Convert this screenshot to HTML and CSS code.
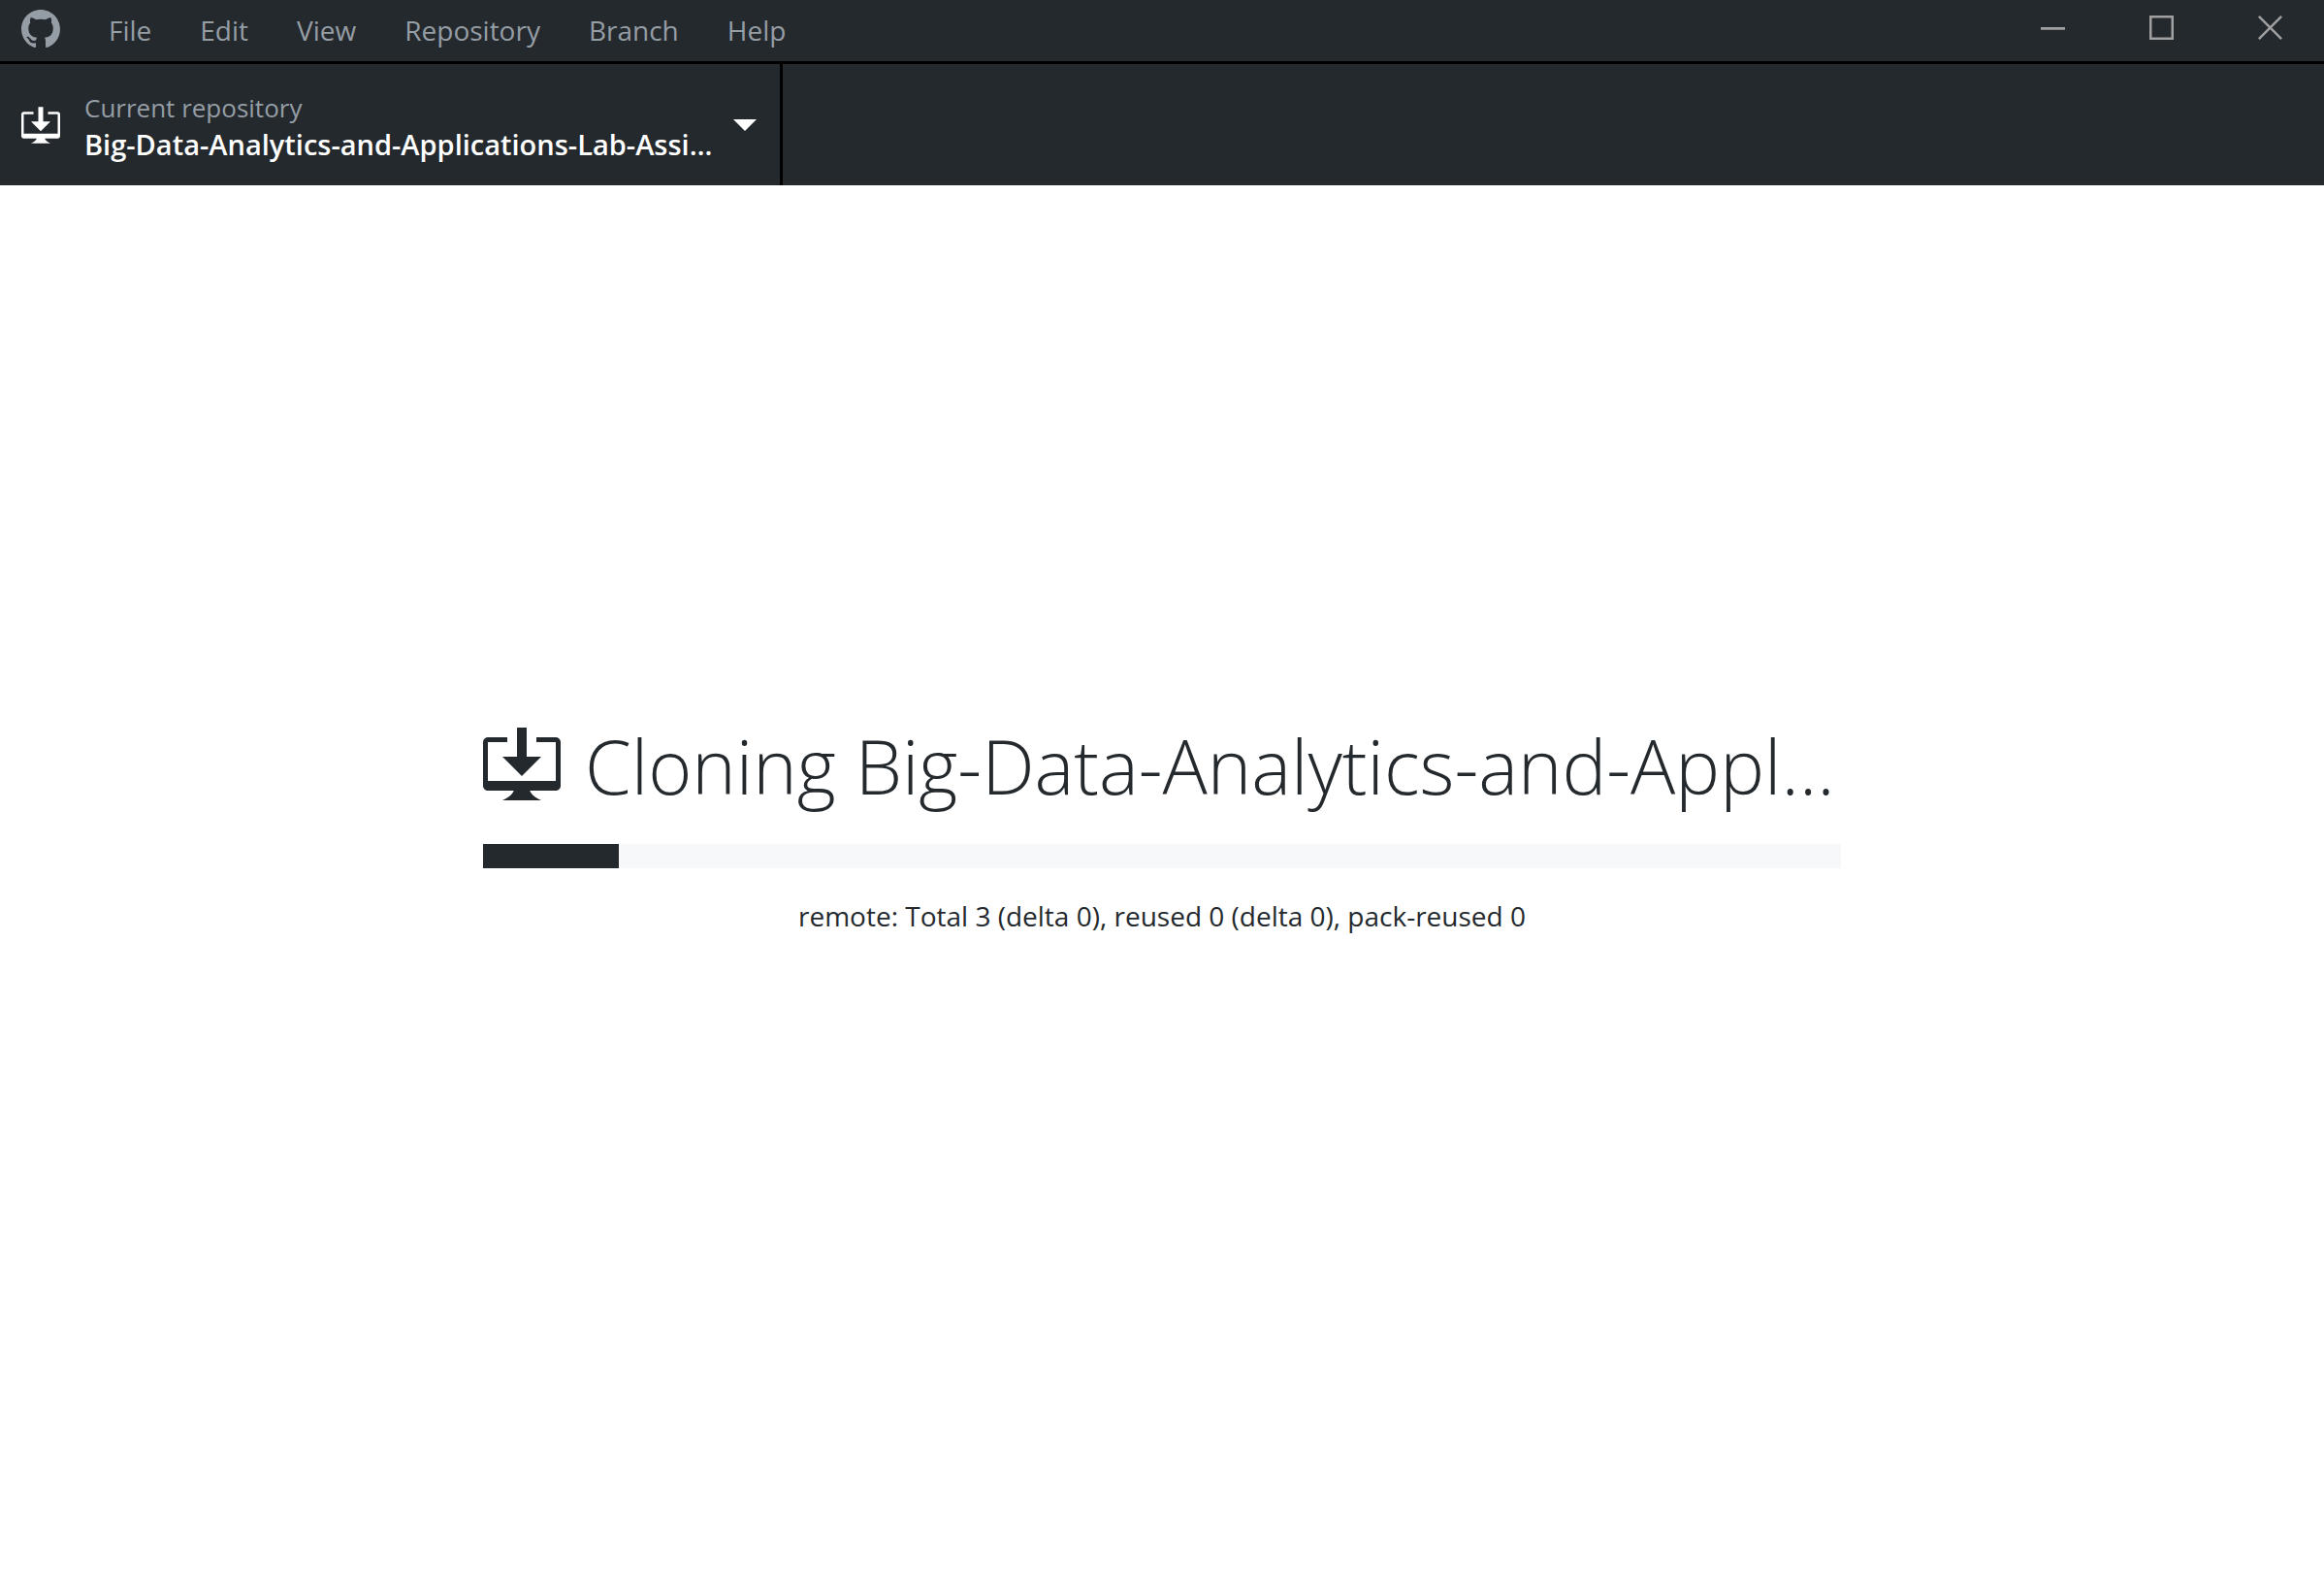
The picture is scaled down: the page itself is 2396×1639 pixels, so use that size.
FILE: index.html
```html
<!DOCTYPE html>
<html lang="en">
<head>
<meta charset="utf-8">
<title>GitHub Desktop</title>
<link rel="stylesheet" href="styles.css">
</head>
<body>
<header class="title-bar">
  <svg class="mark" viewBox="0 0 16 16" aria-hidden="true"><path d="M8 0C3.58 0 0 3.58 0 8c0 3.54 2.29 6.53 5.47 7.59.4.07.55-.17.55-.38 0-.19-.01-.82-.01-1.49-2.01.37-2.53-.49-2.69-.94-.09-.23-.48-.94-.82-1.13-.28-.15-.68-.52-.01-.53.63-.01 1.08.58 1.23.82.72 1.21 1.87.87 2.33.66.07-.52.28-.87.51-1.07-1.78-.2-3.64-.89-3.64-3.95 0-.87.31-1.59.82-2.15-.08-.2-.36-1.02.08-2.12 0 0 .67-.21 2.2.82.64-.18 1.32-.27 2-.27.68 0 1.36.09 2 .27 1.53-1.04 2.2-.82 2.2-.82.44 1.1.16 1.92.08 2.12.51.56.82 1.27.82 2.15 0 3.07-1.87 3.75-3.65 3.95.29.25.54.73.54 1.48 0 1.07-.01 1.93-.01 2.2 0 .21.15.46.55.38A8.013 8.013 0 0 0 16 8c0-4.42-3.58-8-8-8z"/></svg>
  <nav class="menu">
    <button class="menu-item" type="button">File</button>
    <button class="menu-item" type="button">Edit</button>
    <button class="menu-item" type="button">View</button>
    <button class="menu-item" type="button">Repository</button>
    <button class="menu-item" type="button">Branch</button>
    <button class="menu-item" type="button">Help</button>
  </nav>
  <div class="window-controls">
    <button class="window-button" type="button" aria-label="Minimize"><svg class="control-icon" viewBox="0 0 10 10"><path d="M0 4.8h10v1.1H0z"/></svg></button>
    <button class="window-button" type="button" aria-label="Maximize"><svg class="control-icon" viewBox="0 0 10 10"><path fill-rule="evenodd" d="M0 0h10v10H0zM1 1v8h8V1z"/></svg></button>
    <button class="window-button" type="button" aria-label="Close"><svg class="control-icon" viewBox="0 0 10 10"><path d="M.7 0 5 4.3 9.3 0l.7.7L5.7 5 10 9.3l-.7.7L5 5.7.7 10 0 9.3 4.3 5 0 .7z"/></svg></button>
  </div>
</header>
<div class="toolbar">
  <button class="repository-button" type="button">
    <svg class="repository-icon" viewBox="0 0 16 15" aria-hidden="true"><path d="M4 6h3V0h2v6h3l-4 4-4-4zm11-4h-4v1h4v8H1V3h4V2H1c-.55 0-1 .45-1 1v9c0 .55.45 1 1 1h5.34c-.25.61-.86 1.39-2.34 2h8c-1.48-.61-2.09-1.39-2.34-2H15c.55 0 1-.45 1-1V3c0-.55-.45-1-1-1z"/></svg>
    <span class="repository-text">
      <span class="repository-label">Current repository</span>
      <span class="repository-name">Big-Data-Analytics-and-Applications-Lab-Assi…</span>
    </span>
    <svg class="caret" viewBox="0 0 12 6" aria-hidden="true"><path d="M0 0l6 6 6-6z"/></svg>
  </button>
</div>
<main class="cloning">
  <section class="cloning-content">
    <div class="heading">
      <svg class="heading-icon" viewBox="0 0 16 15" aria-hidden="true"><path d="M4 6h3V0h2v6h3l-4 4-4-4zm11-4h-4v1h4v8H1V3h4V2H1c-.55 0-1 .45-1 1v9c0 .55.45 1 1 1h5.34c-.25.61-.86 1.39-2.34 2h8c-1.48-.61-2.09-1.39-2.34-2H15c.55 0 1-.45 1-1V3c0-.55-.45-1-1-1z"/></svg>
      <h1 class="title" id="clone-title">Cloning Big-Data-Analytics-and-Appl…</h1>
    </div>
    <progress class="progress" value="10" max="100" aria-labelledby="clone-title"></progress>
    <p class="details">remote: Total 3 (delta 0), reused 0 (delta 0), pack-reused 0</p>
  </section>
</main>
</body>
</html>
```
FILE: styles.css
```css
* {
  box-sizing: border-box;
}

body {
  margin: 0;
  min-height: 100vh;
  display: flex;
  flex-direction: column;
  font-family: "Open Sans", "Noto Sans", sans-serif;
  font-size: 28px;
  line-height: 38px;
  color: #24292e;
  background: #fff;
}

button {
  margin: 0;
  padding: 0;
  border: 0;
  background: none;
  font: inherit;
  color: inherit;
}

svg {
  display: block;
  flex: none;
  fill: currentColor;
}

.title-bar {
  display: flex;
  height: 66px;
  padding-left: 22px;
  border-bottom: 3px solid #000;
  background: #24292e;
  color: #959da5;
}

.mark {
  width: 40px;
  height: 40px;
  margin-top: 10px;
}

.menu {
  display: flex;
  margin-left: 25px;
}

.menu-item {
  padding: 0 25px 2px;
}

.window-controls {
  display: flex;
  margin-left: auto;
  color: #a0a0a0;
}

.window-button {
  display: flex;
  justify-content: center;
  width: 112px;
  padding-top: 16px;
}

.control-icon {
  width: 25px;
  height: 25px;
}

.toolbar {
  display: flex;
  height: 125px;
  background: #24292e;
}

.repository-button {
  display: flex;
  align-items: center;
  width: 807px;
  padding: 0 24px 0 22px;
  border-right: 3px solid #000;
  color: #fff;
  text-align: left;
}

.repository-icon {
  width: 40px;
  height: 38px;
}

.repository-text {
  display: flex;
  flex: 1;
  flex-direction: column;
  min-width: 0;
  margin: 0 24px 0 25px;
  padding-top: 2px;
  white-space: nowrap;
}

.repository-label {
  font-size: 26px;
  color: #959da5;
}

.repository-name {
  font-size: 29px;
  font-weight: 600;
}

.caret {
  width: 24px;
  height: 12px;
}

.cloning {
  display: flex;
  flex: 1;
  align-items: center;
  justify-content: center;
  padding: 0 50px 132px;
}

.cloning-content {
  width: 100%;
  max-width: 1400px;
}

.heading {
  display: flex;
  align-items: center;
  margin-bottom: 25px;
}

.heading-icon {
  width: 80px;
  height: 75px;
  margin-bottom: 6px;
}

.title {
  margin: 0 0 0 25px;
  font-size: 77px;
  font-weight: 300;
  line-height: 110px;
  white-space: nowrap;
}

.progress {
  display: block;
  width: 100%;
  height: 25px;
  border: 0;
  appearance: none;
  background: #f6f8fa;
}

.progress::-webkit-progress-bar {
  background: #f6f8fa;
}

.progress::-webkit-progress-value {
  background: #24292e;
}

.progress::-moz-progress-bar {
  background: #24292e;
}

.details {
  margin: 30px 0 0;
  text-align: center;
}
```
